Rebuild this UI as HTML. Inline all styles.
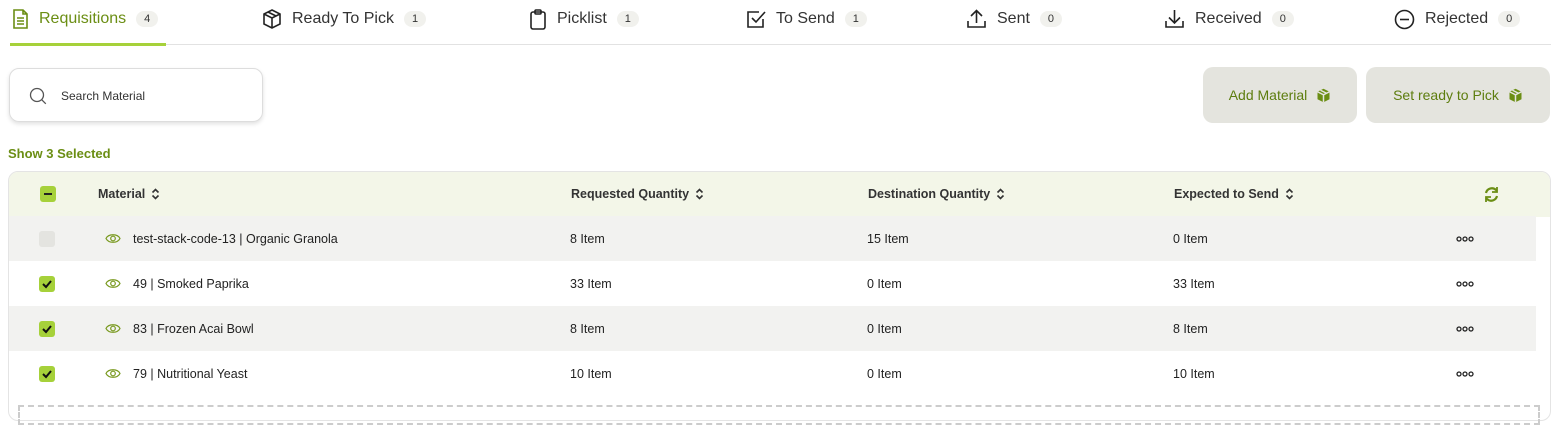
<!DOCTYPE html>
<html><head><style>
*{margin:0;padding:0;box-sizing:border-box}
body{width:1557px;height:413px;overflow:hidden;background:#fff;font-family:"Liberation Sans",sans-serif;color:#222;position:relative}
.abs{position:absolute}
.tab{position:absolute;top:8px;height:22px;display:flex;align-items:center;font-size:16px;color:#333}
.tab svg{margin-right:10px}
.badge{display:inline-block;margin-left:10px;background:#f1f1ed;border-radius:9px;font-size:11px;padding:2px 8px;color:#333}
.btn{position:absolute;top:67px;height:56px;background:#e4e4de;border-radius:10px;color:#5d7d0e;font-size:14px;display:flex;align-items:center;justify-content:center}
.btn svg{margin-left:9px}
.row{position:absolute;left:9px;width:1527px;height:45px;font-size:12.5px;color:#222}
.row span{position:absolute;top:16px}
.cb{position:absolute;left:30px;top:15px;width:16px;height:16px;border-radius:3px;background:#a6d13a}
.th{font-weight:bold;font-size:12.5px;color:#333}
.sort{display:inline-block;vertical-align:middle;margin-left:6px;margin-top:-2px}
.dots{position:absolute;left:1447px;top:20px;width:18px;height:6px}
</style></head><body>
<div class="abs" style="left:10px;top:44px;width:1541px;height:1px;background:#e2e2e2"></div>
<div class="abs" style="left:10px;top:43px;width:156px;height:3px;background:#a6d13a"></div>

<div class="tab" style="left:12px;color:#6b8e14">
<svg width="17" height="20" viewBox="0 0 17 20" fill="none" stroke="#6b8e14" stroke-width="1.6"><path d="M2 1h9l4 4v14H2z M11 1v4h4 M5 9h7 M5 12h7 M5 15h7"/></svg>Requisitions<span class="badge">4</span></div>
<div class="tab" style="left:262px">
<svg width="20" height="20" viewBox="0 0 20 20" fill="none" stroke="#222" stroke-width="1.6"><path d="M10 1l8 4v10l-8 4-8-4V5z M2 5l8 4 8-4 M10 9v10 M6 3l8 4"/></svg>Ready To Pick<span class="badge">1</span></div>
<div class="tab" style="left:529px">
<svg width="18" height="21" viewBox="0 0 18 21" fill="none" stroke="#222" stroke-width="1.6"><rect x="2" y="3" width="14" height="17" rx="2"/><rect x="6" y="1" width="6" height="4" rx="1"/></svg>Picklist<span class="badge">1</span></div>
<div class="tab" style="left:746px">
<svg width="20" height="20" viewBox="0 0 20 20" fill="none" stroke="#222" stroke-width="1.6"><path d="M17 10v8H2V3h11 M6 9l4 4 9-10"/></svg>To Send<span class="badge">1</span></div>
<div class="tab" style="left:966px">
<svg width="21" height="20" viewBox="0 0 21 20" fill="none" stroke="#222" stroke-width="1.6"><path d="M2 12v6h17v-6 M10.5 14V2 M5 7l5.5-5.5L16 7"/></svg>Sent<span class="badge">0</span></div>
<div class="tab" style="left:1164px">
<svg width="21" height="20" viewBox="0 0 21 20" fill="none" stroke="#222" stroke-width="1.6"><path d="M2 12v6h17v-6 M10.5 1v13 M5 8.5l5.5 5.5L16 8.5"/></svg>Received<span class="badge">0</span></div>
<div class="tab" style="left:1394px">
<svg width="21" height="21" viewBox="0 0 21 21" fill="none" stroke="#222" stroke-width="1.6"><circle cx="10.5" cy="10.5" r="9"/><path d="M6 10.5h9"/></svg>Rejected<span class="badge">0</span></div>

<div class="abs" style="left:9px;top:68px;width:254px;height:54px;border:1px solid #ddd;border-radius:10px;box-shadow:0 2px 4px rgba(0,0,0,.12)">
<svg class="abs" style="left:19px;top:18px" width="18" height="18" viewBox="0 0 18 18" fill="none" stroke="#555" stroke-width="1.3"><circle cx="8" cy="8" r="6.5"/><path d="M12.8 12.8l4 4"/></svg>
<span class="abs" style="left:51px;top:20px;font-size:12px;color:#333">Search Material</span></div>

<div class="btn" style="left:1203px;width:154px">Add Material<svg width="15" height="15" viewBox="0 0 20 20"><path d="M10 1l8 4v10l-8 4-8-4V5z" fill="#6b8e14"/><path d="M2 5l8 4 8-4 M10 9v10 M6 3l8 4" stroke="#e4e4de" stroke-width="2" fill="none"/></svg></div>
<div class="btn" style="left:1366px;width:184px">Set ready to Pick<svg width="15" height="15" viewBox="0 0 20 20"><path d="M10 1l8 4v10l-8 4-8-4V5z" fill="#6b8e14"/><path d="M2 5l8 4 8-4 M10 9v10 M6 3l8 4" stroke="#e4e4de" stroke-width="2" fill="none"/></svg></div>

<div class="abs" style="left:8px;top:146px;font-size:13px;color:#6b8e14;font-weight:bold">Show 3 Selected</div>

<div class="abs" style="left:8px;top:171px;width:1543px;height:250px;border:1px solid #e4e4e4;border-radius:10px;overflow:hidden">
<div class="row" style="top:0;left:0;width:1543px;background:#f3f6e8">
<div class="cb" style="left:31px;top:14px"><div class="abs" style="left:4px;top:7px;width:8px;height:2px;background:#222"></div></div>
<span class="th" style="left:89px;top:15px">Material<svg class="sort" width="9" height="12" viewBox="0 0 9 12" fill="none" stroke="#333" stroke-width="1.6"><path d="M1.5 4.5L4.5 1.5 7.5 4.5 M1.5 7.5L4.5 10.5 7.5 7.5"/></svg></span>
<span class="th" style="left:562px;top:15px">Requested Quantity<svg class="sort" width="9" height="12" viewBox="0 0 9 12" fill="none" stroke="#333" stroke-width="1.6"><path d="M1.5 4.5L4.5 1.5 7.5 4.5 M1.5 7.5L4.5 10.5 7.5 7.5"/></svg></span>
<span class="th" style="left:859px;top:15px">Destination Quantity<svg class="sort" width="9" height="12" viewBox="0 0 9 12" fill="none" stroke="#333" stroke-width="1.6"><path d="M1.5 4.5L4.5 1.5 7.5 4.5 M1.5 7.5L4.5 10.5 7.5 7.5"/></svg></span>
<span class="th" style="left:1165px;top:15px">Expected to Send<svg class="sort" width="9" height="12" viewBox="0 0 9 12" fill="none" stroke="#333" stroke-width="1.6"><path d="M1.5 4.5L4.5 1.5 7.5 4.5 M1.5 7.5L4.5 10.5 7.5 7.5"/></svg></span>
<svg class="abs" style="left:1474px;top:14px" width="17" height="17" viewBox="0 0 17 17" fill="none" stroke="#6b8e14" stroke-width="2.2"><path d="M3 7a6 6 0 0 1 10-3l1 1 M14 10a6 6 0 0 1-10 3l-1-1"/><path d="M14 1v5h-5 M3 16v-5h5" stroke-width="1.8"/></svg>
</div>
</div>
<div class="row" style="top:216px;background:#f2f2f0"><div class="cb" style="background:#e4e4e0"></div>
<svg class="abs" style="left:96px;top:16px" width="16" height="13" viewBox="0 0 16 13" fill="none" stroke="#7a9a20" stroke-width="1.2"><path d="M1 6.5c2.5-5 11.5-5 14 0-2.5 5-11.5 5-14 0z"/><circle cx="8" cy="6.5" r="2.3"/></svg>
<span style="left:124px">test-stack-code-13 | Organic Granola</span><span style="left:561px">8 Item</span><span style="left:858px">15 Item</span><span style="left:1164px">0 Item</span><svg class="dots" viewBox="0 0 18 6" fill="none" stroke="#222" stroke-width="1.3"><circle cx="3" cy="3" r="2"/><circle cx="9" cy="3" r="2"/><circle cx="15" cy="3" r="2"/></svg></div>
<div class="row" style="top:261px;background:#fff"><div class="cb"><svg width="16" height="16"><path d="M4 8l3 3 5-6" stroke="#111" stroke-width="2" fill="none"/></svg></div>
<svg class="abs" style="left:96px;top:16px" width="16" height="13" viewBox="0 0 16 13" fill="none" stroke="#7a9a20" stroke-width="1.2"><path d="M1 6.5c2.5-5 11.5-5 14 0-2.5 5-11.5 5-14 0z"/><circle cx="8" cy="6.5" r="2.3"/></svg>
<span style="left:124px">49 | Smoked Paprika</span><span style="left:561px">33 Item</span><span style="left:858px">0 Item</span><span style="left:1164px">33 Item</span><svg class="dots" viewBox="0 0 18 6" fill="none" stroke="#222" stroke-width="1.3"><circle cx="3" cy="3" r="2"/><circle cx="9" cy="3" r="2"/><circle cx="15" cy="3" r="2"/></svg></div>
<div class="row" style="top:306px;background:#f2f2f0"><div class="cb"><svg width="16" height="16"><path d="M4 8l3 3 5-6" stroke="#111" stroke-width="2" fill="none"/></svg></div>
<svg class="abs" style="left:96px;top:16px" width="16" height="13" viewBox="0 0 16 13" fill="none" stroke="#7a9a20" stroke-width="1.2"><path d="M1 6.5c2.5-5 11.5-5 14 0-2.5 5-11.5 5-14 0z"/><circle cx="8" cy="6.5" r="2.3"/></svg>
<span style="left:124px">83 | Frozen Acai Bowl</span><span style="left:561px">8 Item</span><span style="left:858px">0 Item</span><span style="left:1164px">8 Item</span><svg class="dots" viewBox="0 0 18 6" fill="none" stroke="#222" stroke-width="1.3"><circle cx="3" cy="3" r="2"/><circle cx="9" cy="3" r="2"/><circle cx="15" cy="3" r="2"/></svg></div>
<div class="row" style="top:351px;background:#fff"><div class="cb"><svg width="16" height="16"><path d="M4 8l3 3 5-6" stroke="#111" stroke-width="2" fill="none"/></svg></div>
<svg class="abs" style="left:96px;top:16px" width="16" height="13" viewBox="0 0 16 13" fill="none" stroke="#7a9a20" stroke-width="1.2"><path d="M1 6.5c2.5-5 11.5-5 14 0-2.5 5-11.5 5-14 0z"/><circle cx="8" cy="6.5" r="2.3"/></svg>
<span style="left:124px">79 | Nutritional Yeast</span><span style="left:561px">10 Item</span><span style="left:858px">0 Item</span><span style="left:1164px">10 Item</span><svg class="dots" viewBox="0 0 18 6" fill="none" stroke="#222" stroke-width="1.3"><circle cx="3" cy="3" r="2"/><circle cx="9" cy="3" r="2"/><circle cx="15" cy="3" r="2"/></svg></div>
<div class="abs" style="left:18px;top:405px;width:1522px;height:20px;border:2px dashed #ccc"></div>
</body></html>
